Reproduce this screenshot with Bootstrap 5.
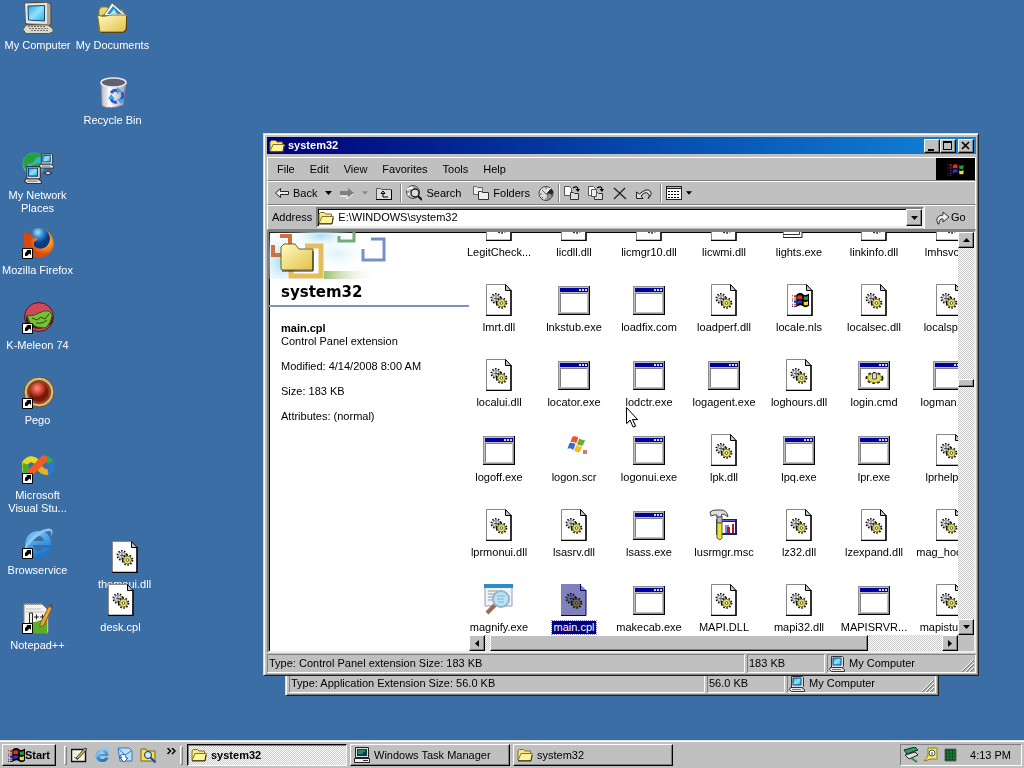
<!DOCTYPE html>
<html lang="en">
<head>
<meta charset="utf-8">
<meta name="viewport" content="width=device-width, initial-scale=1">
<title>system32</title>
<link href="https://cdn.jsdelivr.net/npm/bootstrap@5.3.0/dist/css/bootstrap.min.css" rel="stylesheet">
<style>
:root { --face:#c0c0c0; --desk:#3a6ea5; --dark:#808080; }
body { background:var(--desk); color:#000; font:11px/13px "Liberation Sans", Arial, sans-serif; }
button, input { font:inherit; color:inherit; border:0; padding:0; border-radius:0; background:none; }
svg { display:block; flex:none; }
.i16 { width:16px; height:16px; }
.i32 { width:32px; height:32px; }
.face { background:var(--face); }
.raised { background:var(--face); border:1px solid; border-color:#fff #000 #000 #fff; box-shadow:inset -1px -1px var(--dark); }
.sunken { border:1px solid; border-color:var(--dark) #fff #fff var(--dark); }
.well { border:2px solid; border-color:var(--dark) #eee #eee var(--dark); box-shadow:inset 1px 1px #000; }
.dither { background:repeating-conic-gradient(#fff 0 25%, #c8c8c8 0 50%) 0 0/2px 2px; }
.screen { min-height:100vh; }
.desk-col { width:75px; }
.desk-item { width:75px; height:75px; padding-top:2px; color:#fff; }
.desk-item span, .file-item span { margin-top:5px; }
.gap-cell { margin-top:75px; }
.loose { position:absolute; }
.loose-theme { left:87px; top:539px; }
.loose-desk { left:83px; top:582px; }
.win { position:absolute; background:var(--face); border:1px solid; border-color:#d8d8d8 #202020 #202020 #d8d8d8; box-shadow:inset 1px 1px #fff, inset -1px -1px var(--dark); padding:3px 2px 2px 3px; }
.win-front { left:263px; right:45px; top:133px; bottom:64px; }
.win-back { left:285px; right:85px; top:150px; bottom:44px; }
.titlebar { height:18px; background:linear-gradient(90deg,#000078,#0440a4 45%,#1084d8); color:#fff; font-weight:700; padding:0 2px; margin-bottom:3px; }
.titlebar span { margin-left:3px; }
.cap { width:16px; height:14px; }
.cap-close { margin-left:2px; }
.band { border:1px solid; border-color:#fff #fff var(--dark) #fff; }
.menu { height:24px; padding-left:2px; gap:1px; }
.menu button { padding:0 7px; }
.throb { width:39px; background:#000; }
.tools { height:24px; padding-left:7px; }
.tools button { height:20px; }
.bar { width:2px; height:18px; border-left:1px solid var(--dark); border-right:1px solid #fff; }
.address { height:25px; padding-left:4px; }
.combo { height:21px; background:#fff; }
.combo input { outline:0; }
.drop { width:16px; height:17px; }
.go { width:51px; height:23px; border-left:1px solid #fff; padding-left:10px; }
.pane { min-height:0; background:#fff; }
.info { width:200px; }
.banner { height:47px; }
.info h1 { font:700 15px/18px "DejaVu Sans", sans-serif; margin:0; padding:4px 12px; border-bottom:2px solid #7896bc; }
.details { padding:15px 12px; }
.details p { margin:0 0 12px; }
.view { display:grid; grid-template:minmax(0,1fr) 16px / minmax(0,1fr) 16px; }
.files { display:grid; grid-template-columns:repeat(7,60px); column-gap:15px; row-gap:25px; align-content:end; padding:0 0 1px 4px; margin-left:-4px; overflow:hidden; }
.file-item { height:50px; white-space:nowrap; }
.file-item span { padding:0 2px; }
.picked span { background:#000080; color:#fff; outline:1px dotted #8080c0; }
.sb { width:16px; height:16px; }
.up-part { flex:131 0 0; } .down-part { flex:231 0 0; }
.v-thumb { height:8px; }
.h-start { flex:0 0 5px; } .h-thumb { flex:378 0 0; } .h-end { flex:75 0 0; }
.status { height:20px; padding-top:1px; gap:2px; }
.status div { height:19px; padding:0 1px; display:flex; align-items:center; }
.s-size { width:78px; } .s-place { width:149px; }
.grip { width:12px; height:12px; }
.task { height:28px; border-top:1px solid #dfdfdf; box-shadow:inset 0 1px #fff; padding:3px 2px 2px; z-index:5; }
.task button { height:22px; }
.start { width:54px; font-weight:700; }
.handle { width:3px; height:19px; border:1px solid; border-color:#fff var(--dark) var(--dark) #fff; }
.quick button { width:23px; }
.more { padding-bottom:8px; }
.tasks { gap:3px; }
.task-btn { width:160px; padding:0 3px; }
.pressed { border:1px solid; border-color:#000 #fff #fff #000; box-shadow:inset 1px 1px var(--dark); font-weight:700; }
.tray { width:122px; height:22px; padding:0 10px 0 2px; }
.pointer { position:absolute; left:626px; top:407px; width:13px; height:22px; pointer-events:none; }
</style>
</head>
<body>
<svg width="0" height="0" class="position-absolute" aria-hidden="true">
<defs>
<linearGradient id="gScreen" x2="1" y2="1"><stop stop-color="#2c9fe0"/><stop offset=".5" stop-color="#8fe4fb"/><stop offset="1" stop-color="#2ba6e4"/></linearGradient>
<linearGradient id="gFolder" x2="1" y2="1"><stop stop-color="#fffbc0"/><stop offset="1" stop-color="#e2c048"/></linearGradient>
<linearGradient id="gBin"><stop stop-color="#b8b4c4"/><stop offset=".35" stop-color="#fff"/><stop offset="1" stop-color="#9d9bb0"/></linearGradient>
<radialGradient id="gBlue" cx=".45" cy=".2"><stop stop-color="#a6e2ff"/><stop offset=".5" stop-color="#2f86d0"/><stop offset="1" stop-color="#0b3a80"/></radialGradient>
<radialGradient id="gFox" cx=".7" cy=".4"><stop stop-color="#ffd84a"/><stop offset=".6" stop-color="#f08020"/><stop offset="1" stop-color="#d84810"/></radialGradient>
<radialGradient id="gRed" cx=".4" cy=".3"><stop stop-color="#ff9080"/><stop offset=".6" stop-color="#c84030"/><stop offset="1" stop-color="#781808"/></radialGradient>
<linearGradient id="gIe" x2=".4" y2="1"><stop stop-color="#7fd0fa"/><stop offset="1" stop-color="#1878d0"/></linearGradient>

<symbol id="gears" viewBox="0 0 18 16">
 <circle cx="6" cy="5.500" r="4.600" fill="none" stroke="#000" stroke-width="1.800" stroke-dasharray="1.400 1.490"/><circle cx="6" cy="5.500" r="3.500" fill="#e0e0e0" stroke="#666" stroke-width=".7"/><path d="M6 3v5M4 5.500h4" stroke="#444" stroke-width=".8"/>
 <circle cx="11.500" cy="10" r="4.800" fill="none" stroke="#111100" stroke-width="2" stroke-dasharray="1.500 1.515"/><circle cx="11.500" cy="10" r="3.900" fill="#e8e460" stroke="#666620" stroke-width=".8"/><circle cx="11.500" cy="10" r="1.400" fill="#fff" stroke="#333" stroke-width=".8"/>
</symbol>
<symbol id="page" viewBox="0 0 32 32"><path d="M3.500.500H22L28 6.500V31.500H3.500z" fill="#fff" stroke="#888"/><path d="M28 6V31.500H3" fill="none" stroke="#000" stroke-width="1.500"/><path d="M22.500.500V6.500H28z" fill="#ccc" stroke="#000"/></symbol>
<symbol id="dll" viewBox="0 0 32 32"><use href="#page"/><use href="#gears" x="7" y="9" width="18" height="16"/></symbol>
<symbol id="cpl" viewBox="0 0 32 32"><path d="M3 0H22L28 6V32H3z" fill="#8080bc"/><path d="M28 6V31.500H3M22.500 0V6.500H28" fill="none" stroke="#000068"/><g style="mix-blend-mode:multiply"><use href="#gears" x="7" y="9" width="18" height="16"/></g></symbol>
<symbol id="exe" viewBox="0 0 32 32"><g shape-rendering="crispEdges"><path d="M0 2H32V31H0z" fill="#000"/><path d="M0 2H31V30H0z" fill="#909090"/><path d="M1 3H30V29H1z" fill="#c0c0c0"/><path d="M2 4H30V8H2z" fill="#0000a0"/><path d="M21 5h2v2h-2zM24 5h2v2h-2zM27 5h2v2h-2z" fill="#d8d8d8"/><path d="M2 9H29V28H2z" fill="#808080"/><path d="M3 10H29V28H3z" fill="#fff"/></g></symbol>
<symbol id="cmd" viewBox="0 0 32 32"><use href="#exe"/><ellipse cx="16.500" cy="19" rx="7.500" ry="4.500" fill="none" stroke="#222200" stroke-width="3" stroke-dasharray="2.500 2"/><ellipse cx="16.500" cy="19" rx="7" ry="4.500" fill="#e4e050" stroke="#888820"/><path d="M14.500 14h4v6h-4z" fill="#ddd" stroke="#555"/></symbol>
<symbol id="winflag" viewBox="0 0 16 14"><path d="M4 1.500Q8-1.500 10.500 1 13 3 16 .500V12q-3 2.500-5.500.5Q8 10 4 13z" fill="#000"/><path d="M0 2h1v1H0zM2 2h2v2H2zM0 5h1v1H0zM2 5h2v1H2zM0 10h1v1H0zM2 10h2v1H2z" fill="#c01818"/><path d="M0 7h1v1H0zM2 7h2v2H2zM0 12h1v1H0zM2 12h2v1H2z" fill="#1818a0"/><path d="M5 3q2-1.600 4.500-.5V6Q7 5 5 6z" fill="#e03018"/><path d="M11 3q2 1 4-.5V6q-2 1-4 0z" fill="#209848"/><path d="M5 7.500Q7 6 9.500 7.500V10Q7 9 5 11z" fill="#2838d0"/><path d="M11 8q2 1 4-.5V11q-2 1-4 0z" fill="#f0e020"/></symbol>
<symbol id="nls" viewBox="0 0 32 32"><use href="#page" x="1"/><use href="#winflag" x="9" y="9" width="17" height="15"/></symbol>
<symbol id="scr" viewBox="0 0 32 32"><g transform="rotate(12 16 10)"><path d="M13 3q4-2 6 0l-1 6q-3-2-6 0z" fill="#e85828"/><path d="M20 3.500q3 1.500 6 0l-1 6q-3 1.500-6 0z" fill="#68b030"/><path d="M11.500 10q4-2 6 0l-1 6q-3-2-6 0z" fill="#3868d0"/><path d="M18.500 10.500q3 1.500 6 0l-1 6q-3 1.500-6 0z" fill="#f0c020"/></g><path d="M25 16h4v4h-4z" fill="#d87868"/></symbol>
<symbol id="msc" viewBox="0 0 32 32"><path d="M8 10H29V26H8z" fill="#202060"/><path d="M9 13H27V24H9z" fill="#fff"/><path d="M9 11H27V12H9z" fill="#6060d0"/><path d="M17 16h4v8h-4z" fill="#8888d8"/><path d="M19 18h3v6h-3zM24 15h2v9h-2z" fill="#b01830"/><path d="M9 7h5v7H9z" fill="#bbb" stroke="#555"/><path d="M9 14h5v15l-2 2-3-2z" fill="#e8e040" stroke="#666600"/><path d="M2 3Q4 1 8 1h5q6 0 7 7-3-3-6-3l-1 3H9V6H6L3 7z" fill="#ddd" stroke="#444"/></symbol>
<symbol id="mag" viewBox="0 0 32 32"><path d="M2 1H29V22H2z" fill="#eef2f6" stroke="#8aa0b0"/><path d="M1 0H30V4H1z" fill="#2c8cc8"/><path d="M5 7H15M5 10H12M5 13H10M5 16H10" stroke="#999"/><path d="M12 21 4 29" stroke="#9c6c50" stroke-width="4"/><circle cx="18" cy="15" r="8" fill="#b8e4f4" stroke="#98b4c4" stroke-width="2"/><path d="M14 12h8M14 15h7M15 18h6" stroke="#78b8d4"/></symbol>
<symbol id="lights" viewBox="0 0 32 32"><path d="M0 6H19V28.500H0z" fill="#fff" stroke="#222"/><path d="M16.500 6V25.500H0" stroke="#333" fill="none"/></symbol>

<symbol id="folder" viewBox="0 0 16 16"><path d="M1 13V4L2.500 2.500h4L8 4h5.500v9.500H2z" fill="#f4e88a" stroke="#807020"/><path d="M1 13.500 4 6.500H15.500L14 13.500z" fill="#fff49a" stroke="#807428"/><path d="M1 14h13l1-6" fill="none" stroke="#333"/></symbol>
<symbol id="pc16" viewBox="0 0 16 16"><path d="M2.500.500h11l1 1v9l-1 1h-11z" fill="#ddd" stroke="#333"/><path d="M4 2h8v7H4z" fill="url(#gScreen)" stroke="#044a88"/><path d="M1.500 11.500h11l3 2v2h-13l-2-2z" fill="#e8e8e8" stroke="#333"/><path d="M3 13.500h9" stroke="#777"/></symbol>
<symbol id="computer" viewBox="0 0 32 32"><path d="M3 1 25 0l4 2v20l-3 2L4 22z" fill="#a8a49a" stroke="#48443c"/><path d="M3 1.500 25 1v21L4 21z" fill="#e8e4d8"/><path d="M6 4 22.500 3.500v15.500L6.500 18z" fill="url(#gScreen)" stroke="#104878"/><path d="M4 23h22l5 4v3l-4 1.500H4l-3-4z" fill="#ded9ca" stroke="#5c564c"/><path d="M6 24.500h17M7 26.500h19M9 28.500h17" stroke="#77706a" stroke-dasharray="2 1"/></symbol>
<symbol id="docs" viewBox="0 0 32 32"><path d="M2 29V8L4 5h6l3 3h13v5H5z" fill="#e8d870" stroke="#8d7d20"/><path d="m7 13 8-12L29 13v5z" fill="#fff" stroke="#777"/><path d="m10 12 6-8 9 8z" fill="#248ed0"/><path d="m13 12 4-5 3 5z" fill="#a8e8fa"/><path d="M.500 13Q5 15 9 14t6-1h15l-1 14-3 3H3z" fill="url(#gFolder)" stroke="#807020"/><path d="M29.500 14v14l-3 2.500H4" fill="none" stroke="#504810"/></symbol>
<symbol id="bin" viewBox="0 0 32 32"><path d="M4 5 5 29q8 4 21-1L29 5z" fill="url(#gBin)" stroke="#868294"/><ellipse cx="16.500" cy="5.500" rx="12.500" ry="4.500" fill="#606070" stroke="#e8e8ee" stroke-width="1.500"/><g fill="none" stroke="#3058d0" stroke-width="3"><path d="M14 16q3-4 7-2M25 15q2 6-2 8M20 25q-5 1-6-4"/></g><path d="m20 10 5 4-5 3zM27 22l-7 0 4 5zM11 22l3-5 4 5z" fill="#38a8d8"/></symbol>
<symbol id="network" viewBox="0 0 32 32"><circle cx="12" cy="12" r="11.500" fill="#38b0c8"/><path d="M1 12Q2 1 13 1q4 0 7 3l-6 2-3 5-5 1-3 5zM10 13l7-2 3 5-6 6z" fill="#28a038"/><use href="#pc16" x="17" y="1" width="15" height="16"/><path d="M19 20 25 17h7v7l-9 1z" fill="#4a6898"/><path d="m22 21 4-2 4 2-4 2z" fill="#c8d4f0" stroke="#182848"/><use href="#pc16" x="2" y="14" width="18" height="18"/></symbol>
<symbol id="short" viewBox="0 0 32 32"><path d="M.500 21.500H10.500V31.500H.500z" fill="#fff" stroke="#000"/><path d="M3 29v-3l2.500-2.500L4 23h5v5l-1.500-1.500L5 29z" fill="#000"/></symbol>
<symbol id="firefox" viewBox="0 0 32 32"><circle cx="17" cy="16" r="14.500" fill="url(#gFox)"/><circle cx="17" cy="12" r="11" fill="url(#gBlue)"/><path d="M2 4 6 8 11 6 10 10 16 12 12 15 12 19q5 5 12 1 6-5 3-14 6 7 4 15-4 10-15 9Q4 29 2 18z" fill="url(#gFox)"/><use href="#short"/></symbol>
<symbol id="kmeleon" viewBox="0 0 32 32"><circle cx="17" cy="15" r="14.500" fill="#d04858" stroke="#50141c"/><path d="M4 22q13 10 26-1l1-6-14-3-13 2z" fill="#501820"/><path d="M5 14q7 0 12-3t10-2l3 4q-1 9-7 13l-8-1-7-4z" fill="#78c038" stroke="#286010"/><path d="m10 16 5 2 4-3 4 2 4-5M14 21q7 1 11-3" stroke="#204c0c" fill="none"/><use href="#short"/></symbol>
<symbol id="pego" viewBox="0 0 32 32"><circle cx="17" cy="15" r="13.500" fill="#8c4020" stroke="#dcb870" stroke-width="3"/><circle cx="17" cy="15" r="9.500" fill="url(#gRed)"/><circle cx="17" cy="15" r="15" fill="none" stroke="#685028"/><use href="#short"/></symbol>
<symbol id="vs" viewBox="0 0 32 32"><g fill="none" stroke-width="6"><path d="M16 11Q9 4 4 10t3 12" stroke="#e8d820"/><path d="M4 12q-2 6 3 10" stroke="#40b030"/><path d="M17 11q8-8 12 0" stroke="#38a848"/><path d="M29 10q3 7-3 11" stroke="#2878d8"/><path d="M26 20q-6 1-11-8" stroke="#e8b020"/><path d="M9 20 22 7" stroke="#ee5c28" stroke-width="7" stroke-linecap="round"/></g><use href="#short"/></symbol>
<symbol id="ie" viewBox="0 0 32 32"><path fill-rule="evenodd" d="M16 4q13 0 13 14H11q1 6 6 6 4 0 5-3h7q-3 9-12 9Q4 29 3 18 4 5 16 4zM11 14h11q-1-5-6-5-4 0-5 5z" fill="url(#gIe)"/><path d="M3 25Q1 17 12 8 24 0 29 2q3 2 0 8 1-5-1-6-5-1-14 7Q4 19 3 25z" fill="#8cc8ee"/></symbol>
<symbol id="iepage" viewBox="0 0 32 32"><use href="#ie"/><use href="#short"/></symbol>
<symbol id="npp" viewBox="0 0 32 32"><path d="M2 2H20L26 8V31H2z" fill="#f4f4ee" stroke="#888"/><path d="M3 21q12 0 22-6v16H3z" fill="#5cae28"/><path d="M4 7H19M4 10H22" stroke="#bbb"/><path d="M3 2H20" stroke="#888" stroke-dasharray="1 1" stroke-width="2"/><path d="M7.500 22V11h3v11M12 15h5m-2.500-2.500v5M18 15h5m-2.500-2.500v5" fill="none" stroke="#222"/><path d="m18 22 9-18 3 2-8 17-4 2z" fill="#e8a840" stroke="#8a5418"/><path d="m27 4 1-3 3 1-1 4z" fill="#556"/><use href="#short"/></symbol>
<symbol id="tri" viewBox="0 0 7 4"><path d="M0 0H7L3.500 4z"/></symbol>
<symbol id="copy" viewBox="0 0 16 16"><path d="M.500 1.500h5l2 2v7h-7z" fill="#fff" stroke="#555"/><path d="M6.500 7.500h3l1 1h4v6h-8z" fill="#ddd" stroke="#333"/><path d="M9 3q5-3 5 2" fill="none" stroke="#000" stroke-width="1.300"/><path d="m11.500 4 4.500 0L14 7z"/></symbol>
<symbol id="grip" viewBox="0 0 12 12"><path d="M0 12 12 0M4 12l8-8M8 12l4-4" stroke="#808080" stroke-width="1.500"/><path d="M-1 12 12-1M3 12l9-9M7 12l5-5" stroke="#fff"/></symbol>
</defs>
</svg>

<div class="screen d-flex flex-column position-relative overflow-hidden">
<main class="flex-grow-1 position-relative">
 <div class="d-flex" id="desktop"></div>
 <button class="loose loose-theme desk-item d-flex flex-column align-items-center"><svg class="i32"><use href="#dll"/></svg><span>themeui.dll</span></button>
 <button class="loose loose-desk desk-item d-flex flex-column align-items-center"><svg class="i32"><use href="#dll"/></svg><span>desk.cpl</span></button>

 <section class="win win-back d-flex flex-column justify-content-end">
  <footer class="status d-flex">
   <div class="sunken flex-grow-1">Type: Application Extension Size: 56.0 KB</div><div class="sunken s-size">56.0 KB</div>
   <div class="sunken s-place gap-1"><svg class="i16"><use href="#pc16"/></svg><span class="flex-grow-1">My Computer</span><svg class="grip align-self-end"><use href="#grip"/></svg></div>
  </footer>
 </section>

 <section class="win win-front d-flex flex-column">
  <header class="titlebar d-flex align-items-center">
   <svg class="i16"><use href="#folder"/></svg><span class="flex-grow-1">system32</span>
   <button class="cap raised" aria-label="Minimize"><svg width="14" height="12" viewBox="0 0 14 12"><path d="M3 9h6v2H3z"/></svg></button>
   <button class="cap raised" aria-label="Maximize"><svg width="14" height="12" viewBox="0 0 14 12"><path d="M2 1h9v9H2zM3 3v6h7V3z" fill-rule="evenodd"/></svg></button>
   <button class="cap cap-close raised" aria-label="Close"><svg width="14" height="12" viewBox="0 0 14 12"><path d="m3 2 7 7m0-7-7 7" stroke="#000" stroke-width="1.600"/></svg></button>
  </header>
  <nav class="band menu d-flex align-items-stretch flex-shrink-0">
   <button>File</button><button>Edit</button><button>View</button><button>Favorites</button><button>Tools</button><button class="me-auto">Help</button>
   <div class="throb d-flex align-items-center justify-content-center"><svg width="18" height="15"><use href="#winflag"/></svg></div>
  </nav>
  <div class="band tools d-flex align-items-center flex-shrink-0">
   <button class="d-flex align-items-center"><svg width="14" height="12" viewBox="0 0 14 12" fill="#eee" stroke="#222"><path d="M5.500 1.500v3h8v3h-8v3L.500 6z"/></svg><span class="ms-1">Back</span></button>
   <button class="ms-2" aria-label="Back list"><svg width="7" height="4"><use href="#tri"/></svg></button>
   <button class="ms-2" aria-label="Forward"><svg width="14" height="12" viewBox="0 0 14 12"><path d="M8 1v3H0v4h8v3l6-5z" fill="#808080"/><path d="M0 9h7v3l6-5" fill="none" stroke="#fff"/></svg></button>
   <button class="ms-2" aria-label="Forward list"><svg width="6" height="4" fill="#888"><use href="#tri"/></svg></button>
   <button class="ms-2" aria-label="Up"><svg class="i16" viewBox="0 0 16 16"><path d="M.500 3.500h4l1 1h10v10H.500z" fill="#ddd" stroke="#555"/><path d="M0 14.500h16M15.500 5v10" stroke="#000"/><path d="M5 8.500h4L7 6zM7 8v4h5" fill="none" stroke="#000"/></svg></button>
   <i class="bar ms-2 me-1"></i>
   <button class="d-flex align-items-center"><svg class="i16" viewBox="0 0 16 16"><circle cx="7" cy="7" r="6.500" fill="#aaa" stroke="#555"/><path d="M1 5q5-5 7 1M2 10q2-4 5 2" stroke="#fff" fill="none" stroke-width="2"/><circle cx="9" cy="8" r="4" fill="#ddd" stroke="#222" stroke-width="1.500"/><path d="m12 11 4 4" stroke="#111" stroke-width="2"/></svg><span class="ms-1">Search</span></button>
   <button class="d-flex align-items-center ms-2 ps-1"><svg class="i16" viewBox="0 0 16 16"><path d="M.500 1.500h3l1 1h5v7h-9z" fill="#eee" stroke="#666"/><path d="M5.500 6.500h3l1 1h6v7h-10z" fill="#eee" stroke="#333"/></svg><span class="ms-1">Folders</span></button>
   <button class="ms-2" aria-label="History"><svg class="i16" viewBox="0 0 16 16"><circle cx="8" cy="8.500" r="7" fill="#ddd" stroke="#444"/><path d="M8 9 13 3l2.500 4-2 4z" fill="#222"/><path d="m8 9-4-4M8 2v2M2 9h2M8 13v2M4 13l1-1M9 9h4l1 3-4 3z" stroke="#666" fill="#999"/><path d="m8 8 5-5" stroke="#fff"/></svg></button>
   <i class="bar mx-1"></i>
   <button aria-label="Move to"><svg class="i16"><use href="#copy"/></svg></button>
   <button class="ms-2" aria-label="Copy to"><svg class="i16" viewBox="0 0 16 16"><use href="#copy"/><path d="M3.500 4.500h5v7h-5z" fill="#eee" stroke="#555"/></svg></button>
   <button class="ms-2" aria-label="Delete"><svg class="i16" viewBox="0 0 16 16"><path d="m2 3 12 11M13 3 2 14" stroke="#222" stroke-width="1.300"/></svg></button>
   <button class="ms-2" aria-label="Undo"><svg class="i16" viewBox="0 0 16 16"><path d="M.500 7v6.500H7L5 11Q9 6 12 8.500t0 5q5-4 2-7.500T3.500 9z" fill="#ddd" stroke="#222"/></svg></button>
   <i class="bar ms-2 me-1"></i>
   <button class="d-flex align-items-center" aria-label="Views"><svg class="i16" viewBox="0 0 16 16" shape-rendering="crispEdges"><path d="M0 1h16v14H0z" fill="#222"/><path d="M1 4h14v10H1z" fill="#fff"/><path d="M1 2h14v1H1z" fill="#bbb"/><path d="M2 6h12M2 9h12M2 12h12" stroke="#000" stroke-width="1" stroke-dasharray="2 1"/></svg><svg class="ms-1" width="6" height="4"><use href="#tri"/></svg></button>
  </div>
  <div class="band address d-flex align-items-center flex-shrink-0">
   <label for="addr" class="me-1">Address</label>
   <div class="combo well d-flex align-items-center flex-grow-1"><svg class="i16 me-1"><use href="#folder"/></svg><input id="addr" class="flex-grow-1" value="E:\WINDOWS\system32"><button class="drop raised d-flex align-items-center justify-content-center" aria-label="Address list"><svg width="7" height="4"><use href="#tri"/></svg></button></div>
   <button class="go d-flex align-items-center"><svg class="i16" viewBox="0 0 16 16"><path d="M3 14Q-1 6 8 5V2l6 5-6 5V9q-4-1-4 5z" fill="#eee" stroke="#333"/></svg><span>Go</span></button>
  </div>
  <div class="pane well d-flex flex-grow-1">
   <aside class="info flex-shrink-0">
    <svg class="banner w-100" viewBox="0 0 200 47" preserveAspectRatio="xMinYMin slice">
     <defs><radialGradient id="b1"><stop stop-color="#a8dff2"/><stop offset="1" stop-color="#fff" stop-opacity="0"/></radialGradient><linearGradient id="b2"><stop stop-color="#9cc070"/><stop offset="1" stop-color="#fff" stop-opacity="0"/></linearGradient></defs>
     <ellipse cx="12" cy="30" rx="28" ry="36" fill="url(#b1)"/><ellipse cx="52" cy="4" rx="36" ry="14" fill="url(#b1)"/><ellipse cx="68" cy="22" rx="34" ry="18" fill="url(#b1)" opacity=".4"/><path d="M55 39H108V47H55z" fill="url(#b2)"/>
     <path d="M11 4h10v9M4 13v10h9" stroke="#cf7040" stroke-width="4" fill="none"/><path d="M36 14H52V44H22V36" stroke="#e4bd5c" stroke-width="5" fill="none"/><path d="M70 4v5h15V0" stroke="#70ac78" stroke-width="3" fill="none"/><path d="M102 7h13v21H94V17" stroke="#7492c8" stroke-width="3" fill="none"/>
     <path d="M12 37V15l3-3h11l4 5h14v21H13z" fill="url(#gFolder)" stroke="#6b6020"/><path d="M44 19v20H13" fill="none" stroke="#222"/>
    </svg>
    <h1>system32</h1>
    <div class="details"><b>main.cpl</b><p>Control Panel extension</p><p>Modified: 4/14/2008 8:00 AM</p><p>Size: 183 KB</p><p>Attributes: (normal)</p></div>
   </aside>
   <div class="view flex-grow-1">
    <div class="files" id="files"></div>
    <div class="dither d-flex flex-column">
     <button class="sb raised d-flex align-items-center justify-content-center" aria-label="Scroll up"><svg width="7" height="4" viewBox="0 0 7 4"><path d="M0 4H7L3.500 0z"/></svg></button><div class="up-part"></div><div class="v-thumb raised"></div><div class="down-part"></div>
     <button class="sb raised d-flex align-items-center justify-content-center" aria-label="Scroll down"><svg width="7" height="4"><use href="#tri"/></svg></button>
    </div>
    <div class="dither d-flex">
     <button class="sb raised d-flex align-items-center justify-content-center" aria-label="Scroll left"><svg width="4" height="7" viewBox="0 0 4 7"><path d="M4 0V7L0 3.500z"/></svg></button><div class="h-start"></div><div class="h-thumb raised"></div><div class="h-end"></div>
     <button class="sb raised d-flex align-items-center justify-content-center" aria-label="Scroll right"><svg width="4" height="7" viewBox="0 0 4 7"><path d="M0 0V7L4 3.500z"/></svg></button>
    </div>
    <div class="face"></div>
   </div>
  </div>
  <footer class="status d-flex flex-shrink-0">
   <div class="sunken flex-grow-1">Type: Control Panel extension Size: 183 KB</div><div class="sunken s-size">183 KB</div>
   <div class="sunken s-place gap-1"><svg class="i16"><use href="#pc16"/></svg><span class="flex-grow-1">My Computer</span><svg class="grip align-self-end"><use href="#grip"/></svg></div>
  </footer>
 </section>
 <svg class="pointer" viewBox="0 0 13 22"><path d="M1 1V18L5 14.500 8 21l3-1.500L8 13.500H12.500z" fill="#888" opacity=".4"/><path d="M.500.500V16.500L4 13l3 7 2.500-1-3-6.500H11.500z" fill="#fff" stroke="#000"/></svg>
</main>

<footer class="task face d-flex align-items-center">
 <button class="start raised d-flex align-items-center justify-content-center"><svg width="17" height="15"><use href="#winflag"/></svg><span>Start</span></button>
 <i class="handle ms-2"></i>
 <div class="quick d-flex ms-1">
  <button aria-label="Show desktop"><svg class="i16" viewBox="0 0 16 16"><path d="M.500 2.500h14v12H.500z" fill="#f4f4ec" stroke="#111" stroke-width="1.500"/><path d="M3 10 7 13" stroke="#555"/><path d="m5 11 9-10 2 1-9 10z" fill="#d8c050" stroke="#333"/></svg></button>
  <button aria-label="Internet"><svg class="i16"><use href="#ie"/></svg></button>
  <button aria-label="Mail"><svg class="i16" viewBox="0 0 16 16"><path d="M1 1h11l3 3v10H3z" fill="#b8e0fa" stroke="#3c78b8"/><path d="m2 2 6 6 6-4" fill="none" stroke="#3c78b8"/><path d="M4 8q5-2 5 3h2l-4 4-4-4h2q0-2-3-1z" fill="#fff" stroke="#2468b0"/></svg></button>
  <button aria-label="Find"><svg class="i16" viewBox="0 0 16 16"><path d="M1 2h5l1 2h8v10H1z" fill="#f4e050" stroke="#776810"/><circle cx="8" cy="8" r="3.500" fill="#c4eefc" stroke="#226"/><path d="m10.500 10.500 5 5" stroke="#2040b0" stroke-width="2"/></svg></button>
 </div>
 <button class="more ms-1" aria-label="More"><svg width="9" height="7" viewBox="0 0 9 7"><path d="m.500 0 3 3-3 3M5 0l3 3-3 3" fill="none" stroke="#000" stroke-width="1.500"/></svg></button>
 <i class="handle mx-1"></i>
 <div class="tasks d-flex">
 <button class="task-btn pressed dither d-flex align-items-center"><svg class="i16"><use href="#folder"/></svg><span class="ms-1">system32</span></button>
 <button class="task-btn raised d-flex align-items-center"><svg class="i16" viewBox="0 0 16 16"><path d="M1.500.500h13v10h-13z" fill="#ddd" stroke="#222"/><path d="M3 2h10v7H3z" fill="#104048"/><path d="M4 4h7M4 6h5" stroke="#40d080"/><path d="M.500 11.500h15v4H.500z" fill="#eee" stroke="#222"/><path d="M9 13.500h5" stroke="#333"/></svg><span class="ms-1">Windows Task Manager</span></button>
 <button class="task-btn raised d-flex align-items-center"><svg class="i16"><use href="#folder"/></svg><span class="ms-1">system32</span></button>
 </div>
 <div class="tray sunken d-flex align-items-center ms-auto gap-1">
  <svg class="i16" viewBox="0 0 16 16"><path d="M1 3 12 0l3 3-11 4z" fill="#30a050" stroke="#124"/><path d="M2 8l10-3 3 3-9 4z" fill="#ddd" stroke="#222"/><path d="m8 11 6 4" stroke="#28903c" stroke-width="2"/></svg>
  <svg class="i16" viewBox="0 0 16 16"><path d="M5 1h9v11H8l-7 2 4-5z" fill="#f0e868" stroke="#888020"/><circle cx="9" cy="6" r="3" fill="#fff" stroke="#555"/><path d="M9 5v3" stroke="#246"/></svg>
  <svg class="i16" viewBox="0 0 16 16"><path d="M2 2h11v12H2z" fill="#063818" stroke="#666"/><path d="M3 5h9M3 8h9M3 11h9M5 3v10M8 3v10M11 3v10" stroke="#1c8c3c"/></svg>
  <span class="ms-auto">4:13 PM</span>
 </div>
</footer>
</div>

<script src="https://cdn.jsdelivr.net/npm/bootstrap@5.3.0/dist/js/bootstrap.bundle.min.js"></script>
<script>
const item = (cls, id, text) => `<button class="${cls} d-flex flex-column align-items-center"><svg class="i32" aria-hidden="true"><use href="#${id}"/></svg><span>${text}</span></button>`;

document.querySelector('#desktop').innerHTML = [
  [['computer', 'My Computer'], ['network', 'My Network Places', 'gap-cell'], ['firefox', 'Mozilla Firefox'], ['kmeleon', 'K-Meleon 74'],
   ['pego', 'Pego'], ['vs', 'Microsoft Visual Stu...'], ['iepage', 'Browservice'], ['npp', 'Notepad++']],
  [['docs', 'My Documents'], ['bin', 'Recycle Bin']]
].map(col => `<div class="desk-col">${col.map(([id, text, extra = '']) => item('desk-item ' + extra, id, text)).join('')}</div>`).join('');

const files = [
  'LegitCheck...', 'licdll.dll', 'licmgr10.dll', 'licwmi.dll', 'lights.exe|lights', 'linkinfo.dll', 'lmhsvc.dll',
  'lmrt.dll', 'lnkstub.exe', 'loadfix.com', 'loadperf.dll', 'locale.nls', 'localsec.dll', 'localspl.dll',
  'localui.dll', 'locator.exe', 'lodctr.exe', 'logagent.exe', 'loghours.dll', 'login.cmd', 'logman.exe',
  'logoff.exe', 'logon.scr', 'logonui.exe', 'lpk.dll', 'lpq.exe', 'lpr.exe', 'lprhelp.dll',
  'lprmonui.dll', 'lsasrv.dll', 'lsass.exe', 'lusrmgr.msc', 'lz32.dll', 'lzexpand.dll', 'mag_hook.dll',
  'magnify.exe|mag', 'main.cpl', 'makecab.exe', 'MAPI.DLL', 'mapi32.dll', 'MAPISRVR...|exe', 'mapistub.dll'
];
const kinds = { exe: 'exe', com: 'exe', nls: 'nls', cmd: 'cmd', scr: 'scr', msc: 'msc', cpl: 'cpl' };
document.querySelector('#files').innerHTML = files.map(entry => {
  const [name, kind] = entry.split('|');
  return item('file-item' + (name === 'main.cpl' ? ' picked' : ''), kind || kinds[name.split('.').pop()] || 'dll', name);
}).join('');
</script>
</body>
</html>
